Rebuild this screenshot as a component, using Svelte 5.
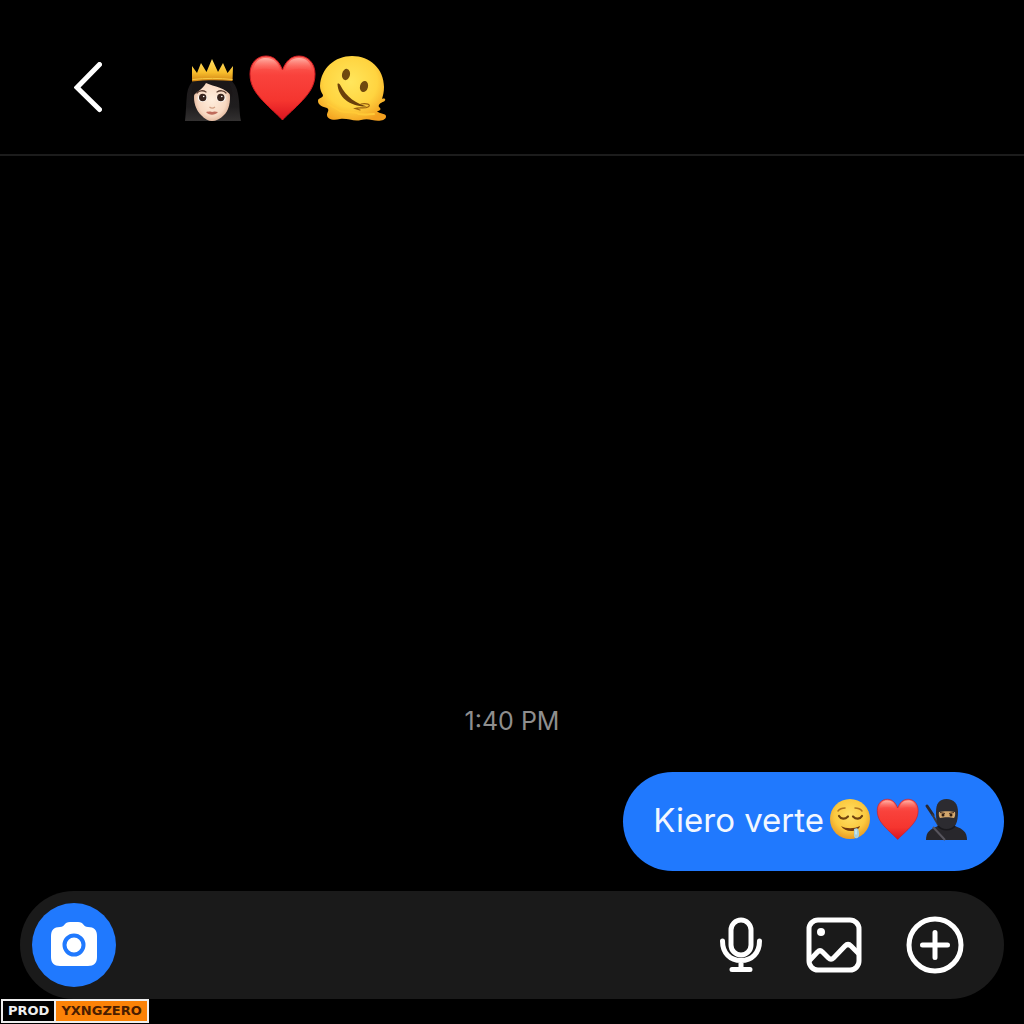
<script lang="ts">
	let draft = '';
	const time = '1:40 PM';
	const message = 'Kiero verte';

	function send() {
		draft = '';
	}
</script>

<svelte:head>
	<title>Chat</title>
</svelte:head>

{#snippet heart()}
	<svg class="emoji" viewBox="0 0 70 70" role="img" aria-label="red heart">
		<defs>
			<linearGradient id="heart-fill" x1="0" y1="0" x2="0" y2="1">
				<stop offset="0" stop-color="#ff6a5f" />
				<stop offset="0.3" stop-color="#f9423c" />
				<stop offset="0.7" stop-color="#f5352f" />
				<stop offset="1" stop-color="#dc141f" />
			</linearGradient>
			<linearGradient id="heart-shine" x1="0" y1="0" x2="0" y2="1">
				<stop offset="0" stop-color="#ffc0b4" stop-opacity="0.85" />
				<stop offset="1" stop-color="#ff6a5f" stop-opacity="0" />
			</linearGradient>
		</defs>
		<path
			d="M34.500 66C31 62 25 57 18 50C8 40 2 32 2 20C2 9 9 2 18 2C26 2 31 7 34.500 16C38 7 43 2 51 2C60 2 67 9 67 20C67 32 61 40 51 50C44 57 38 62 34.500 66Z"
			fill="url(#heart-fill)"
			stroke="#cf1a20"
			stroke-width="1"
		/>
		<path d="M5 17C6 8 11 4 18 4C26 4 31 9 32 18C24 14 13 14 5 17Z" fill="url(#heart-shine)" />
		<path d="M64 17C63 8 58 4 51 4C43 4 38 9 37 18C45 14 56 14 64 17Z" fill="url(#heart-shine)" />
	</svg>
{/snippet}

<div class="chat">
	<header>
		<button class="back" type="button" aria-label="Back">
			<svg width="28" height="54" viewBox="0 0 28 54">
				<path d="M25.500 2.500L3 25.500L25.500 47.500" fill="none" stroke="#fff" stroke-width="5" stroke-linecap="round" stroke-linejoin="miter" />
			</svg>
		</button>
		<h1>
			<svg class="emoji" viewBox="0 0 70 70" role="img" aria-label="princess">
				<defs>
					<linearGradient id="crown" x1="0" y1="0" x2="0" y2="1">
						<stop offset="0" stop-color="#ffdf63" />
						<stop offset="0.6" stop-color="#f7bd2c" />
						<stop offset="1" stop-color="#cf8213" />
					</linearGradient>
					<radialGradient id="skin" cx="0.5" cy="0.5" r="0.6">
						<stop offset="0" stop-color="#ffeedd" />
						<stop offset="0.65" stop-color="#f8d9c2" />
						<stop offset="1" stop-color="#d3a084" />
					</radialGradient>
					<linearGradient id="hair" x1="0" y1="0" x2="0" y2="1">
						<stop offset="0" stop-color="#1b1718" />
						<stop offset="0.7" stop-color="#1f1d1e" />
						<stop offset="1" stop-color="#333131" />
					</linearGradient>
				</defs>
				<path d="M34 19C20 19 11 27 9 40C8 50 8 58 7 67H63C61 58 62 50 60 40C58 27 48 19 34 19Z" fill="url(#hair)" />
				<path d="M34 24C23 24 16 32 16 43C16 51 19 57 23 61C27 65 30 67 34 67C38 67 42 65 46 61C50 57 52 51 52 43C52 32 45 24 34 24Z" fill="url(#skin)" />
				<path d="M14 43C18 38 24 36 28 29C36 33 48 33 54 43C56 32 48 21 34 21C20 21 12 31 14 43Z" fill="#1b1718" />
				<path d="M19 39C21 36.500 25 36 28 38M39 38C42 36 46 36.500 48 39" fill="none" stroke="#5d4034" stroke-width="1.300" stroke-linecap="round" />
				<ellipse cx="24.500" cy="44" rx="4.600" ry="3.900" fill="#fff" />
				<ellipse cx="43" cy="44" rx="4.600" ry="3.900" fill="#fff" />
				<circle cx="24.700" cy="43.500" r="3.700" fill="#38241d" />
				<circle cx="42.800" cy="43.500" r="3.700" fill="#38241d" />
				<circle cx="25.700" cy="42.500" r="0.800" fill="#fff" />
				<circle cx="43.800" cy="42.500" r="0.800" fill="#fff" />
				<path d="M31.500 53C33 54.200 35.500 54.200 37 53" fill="none" stroke="#d3a084" stroke-width="1.200" />
				<path d="M28 58C32 57 33 57.500 34 58C35 57.500 37 57 40 58C37 61.500 31 61.500 28 58Z" fill="#bf6b5b" />
				<path d="M14 12L19 19L23 9L28.500 18L34 5L40 18L45 9L49.500 19L55 12L54.500 27C41 26 27 26 14 27.500Z" fill="url(#crown)" />
				<path d="M14.500 25.500C28 24 41 24 54.500 25.500" fill="none" stroke="#f8c945" stroke-width="1" />
			</svg>
			{@render heart()}
			<svg class="emoji" viewBox="0 0 70 70" role="img" aria-label="melting face">
				<defs>
					<radialGradient id="melt" cx="0.48" cy="0.4" r="0.65">
						<stop offset="0" stop-color="#ffe65c" />
						<stop offset="0.6" stop-color="#ffd440" />
						<stop offset="1" stop-color="#f3a01f" />
					</radialGradient>
				</defs>
				<path
					d="M34 2C52 2 66 15 66 33C66 38 65 41 64 45C67 43.500 68.500 46 66 47.500C62 49 60 51 61 53C64 55 62 57 59 57C61 60 69 59 68 63C67 67 60 67.500 54 66C50 65 47 65 43 66C36 68 30 64 22 65C15 67 9 65 9 61C9 58 12 56 9 54C5 53 0 51 0 47C0 43 5 45 5 41C3 38 2 35 2 32C3 14 17 2 34 2Z"
					fill="url(#melt)"
				/>
				<path d="M10 50C15 53 18 54 22 57C29 59 35 57 41 60C47 61 51 60 56 60" fill="none" stroke="#ffc936" stroke-width="2" stroke-linecap="round" />
				<ellipse cx="28" cy="20.500" rx="4" ry="5.700" transform="rotate(12 28 20.500)" fill="#6f490f" />
				<ellipse cx="46" cy="32.500" rx="4" ry="5.700" transform="rotate(14 46 32.500)" fill="#6f490f" />
				<path d="M19.500 30C20 43 32 53 49 52.500C39 50 28 43 22.500 31.500C21.500 29.500 20 29 19.500 30Z" fill="#6a3f0a" />
				<path d="M43 50C48 49 54 50.500 50 53C47 55 41 53 37 54.500L42 56" fill="none" stroke="#98600e" stroke-width="1.200" stroke-linecap="round" />
			</svg>
		</h1>
	</header>

	<main>
		<time>{time}</time>
		<div class="bubble">
			<span>{message}</span>
			<svg class="emoji" viewBox="0 0 44 44" role="img" aria-label="drooling face">
				<defs>
					<radialGradient id="drool" cx="0.5" cy="0.4" r="0.6">
						<stop offset="0" stop-color="#ffe066" />
						<stop offset="0.65" stop-color="#fbc93f" />
						<stop offset="1" stop-color="#e99b24" />
					</radialGradient>
				</defs>
				<circle cx="22" cy="21" r="20" fill="url(#drool)" />
				<path d="M10 13C12 10.500 14 10 17 10M27 10C30 10 32 10.500 34 13" fill="none" stroke="#b0741f" stroke-width="1.500" stroke-linecap="round" />
				<path d="M11 18C13 21.500 17 21.500 20 18.500M25 18.500C28 21.500 32 21.500 34 18" fill="none" stroke="#70430f" stroke-width="2.200" stroke-linecap="round" />
				<path d="M13 28C18 31 26 31 32 28C30 34.500 17 35 13 28Z" fill="#70370f" />
				<path d="M26 31C28 30 30 30 30.500 32C31 35 32 38 29.500 40C27 41 25.500 39 26 36Z" fill="#a5cfdc" />
				<path d="M28 32V36" stroke="#dcf0f6" stroke-width="1.200" stroke-linecap="round" />
			</svg>
			{@render heart()}
			<svg class="emoji" viewBox="0 0 44 44" role="img" aria-label="ninja">
				<path d="M3 8L9 17" stroke="#2b2930" stroke-width="3" stroke-linecap="round" />
				<path d="M8 16L16 30" stroke="#3a3940" stroke-width="2" />
				<path d="M2 42C2 34 6 31 14 28H31C39 31 43 34 43 42Z" fill="#28272c" />
				<path d="M22.500 1C15 1 12 6 12 14C12 23 13 32 22.500 32C32 32 34 23 34 14C34 6 30 1 22.500 1Z" fill="#2c2b30" />
				<path d="M15 14C19 13 27 13 31 14C31.500 16 31 19 30 20C26 19 20 19 16 20C15 19 14.500 16 15 14Z" fill="#d2a66c" />
				<circle cx="19" cy="17" r="1.500" fill="#2c1c14" />
				<circle cx="27" cy="17" r="1.500" fill="#2c1c14" />
				<path d="M16 14.500L21 15.500M30 14.500L25 15.500" stroke="#4a3020" stroke-width="1" />
				<path d="M9 29L21 42" stroke="#57555d" stroke-width="2" />
				<path d="M14 28C18 33 27 33 31 28" fill="none" stroke="#19181c" stroke-width="1.500" />
			</svg>
		</div>
	</main>

	<form class="composer" on:submit|preventDefault={send}>
		<button class="camera" type="button" aria-label="Camera">
			<svg width="46" height="46" viewBox="0 0 46 46">
				<path d="M19 0H27C33 0 32 5 37 5C43 5 46 8 46 14V35C46 41 43 44 37 44H9C3 44 0 41 0 35V14C0 8 3 5 9 5C14 5 13 0 19 0Z" fill="#fff" />
				<circle cx="23" cy="23" r="9.500" fill="none" stroke="#2079fe" stroke-width="4" />
			</svg>
		</button>
		<input type="text" aria-label="Message" bind:value={draft} />
		<button type="button" aria-label="Voice message">
			<svg width="42" height="56" viewBox="0 0 42 56" class="line">
				<rect x="11" y="3" width="20" height="35" rx="10" />
				<path d="M2.500 24C2.500 36 10 43.500 21 43.500C32 43.500 39.500 36 39.500 24M21 44V52M12 52.500H30" />
			</svg>
		</button>
		<button type="button" aria-label="Photo">
			<svg width="56" height="56" viewBox="0 0 56 56" class="line">
				<rect x="3" y="3" width="50" height="50" rx="9" />
				<path d="M4 43L11.500 35Q14 32.500 16.500 35L22.500 41Q25 43.500 27.500 41L39 29Q42 26 45 29L52 36" />
				<circle cx="15" cy="15" r="4" class="dot" />
			</svg>
		</button>
		<button type="button" aria-label="More">
			<svg width="58" height="58" viewBox="0 0 58 58" class="line">
				<circle cx="29" cy="29" r="26" />
				<path d="M29 16.500V41.500M16.500 29H41.500" />
			</svg>
		</button>
	</form>

	<div class="tag">
		<span>PROD</span>
		<span class="name">YXNGZERO</span>
	</div>
</div>

<style>
	:global(body) {
		background: #000;
	}
	.chat {
		position: relative;
		display: flex;
		flex-direction: column;
		min-height: 100vh;
		box-sizing: border-box;
		padding-bottom: 25px;
		background: #000;
		color: #fff;
		font-family: Inter, Roboto, sans-serif;
	}
	svg {
		display: block;
	}
	header {
		display: flex;
		align-items: center;
		gap: 76px;
		padding: 54px 74px 30px;
		border-bottom: 2px solid #1c1c1c;
	}
	h1 {
		display: flex;
		margin: 0;
	}
	h1 .emoji {
		width: 70px;
		height: 70px;
	}
	button {
		flex: none;
		padding: 0;
		border: none;
		background: none;
		cursor: pointer;
	}
	main {
		flex: 1;
		display: flex;
		flex-direction: column;
		justify-content: flex-end;
		padding: 20px;
	}
	time {
		align-self: center;
		margin-bottom: 36px;
		font-size: 25px;
		line-height: 30px;
		color: #8e8e8e;
	}
	.bubble {
		align-self: flex-end;
		display: flex;
		align-items: center;
		gap: 4px;
		padding: 26px 36px 29px 30px;
		border-radius: 50px;
		background: #2079fe;
		color: #f2f7ff;
		font-size: 33px;
		line-height: 44px;
	}
	.bubble .emoji {
		width: 44px;
		height: 44px;
	}
	.composer {
		display: flex;
		align-items: center;
		gap: 44px;
		margin: 0 20px;
		padding: 12px 40px 12px 12px;
		border-radius: 54px;
		background: #1a1a1a;
	}
	.camera {
		display: flex;
		align-items: center;
		justify-content: center;
		width: 84px;
		height: 84px;
		border-radius: 50%;
		background: #2079fe;
	}
	input {
		flex: 1;
		min-width: 0;
		border: none;
		outline: none;
		background: none;
		color: #fff;
		font: inherit;
		font-size: 33px;
	}
	.line {
		fill: none;
		stroke: #fff;
		stroke-width: 5;
		stroke-linecap: round;
		stroke-linejoin: round;
	}
	.dot {
		fill: #fff;
		stroke: none;
	}
	.tag {
		position: absolute;
		left: 1px;
		bottom: 1px;
		display: flex;
		border: 2px solid #eee;
		background: #000;
		color: #eee;
		font: bold 13px/20px 'DejaVu Sans', sans-serif;
	}
	.tag span {
		padding: 0 5px;
	}
	.tag .name {
		border-left: 2px solid #eee;
		background: #fb8207;
		color: #4a1d00;
	}
</style>
